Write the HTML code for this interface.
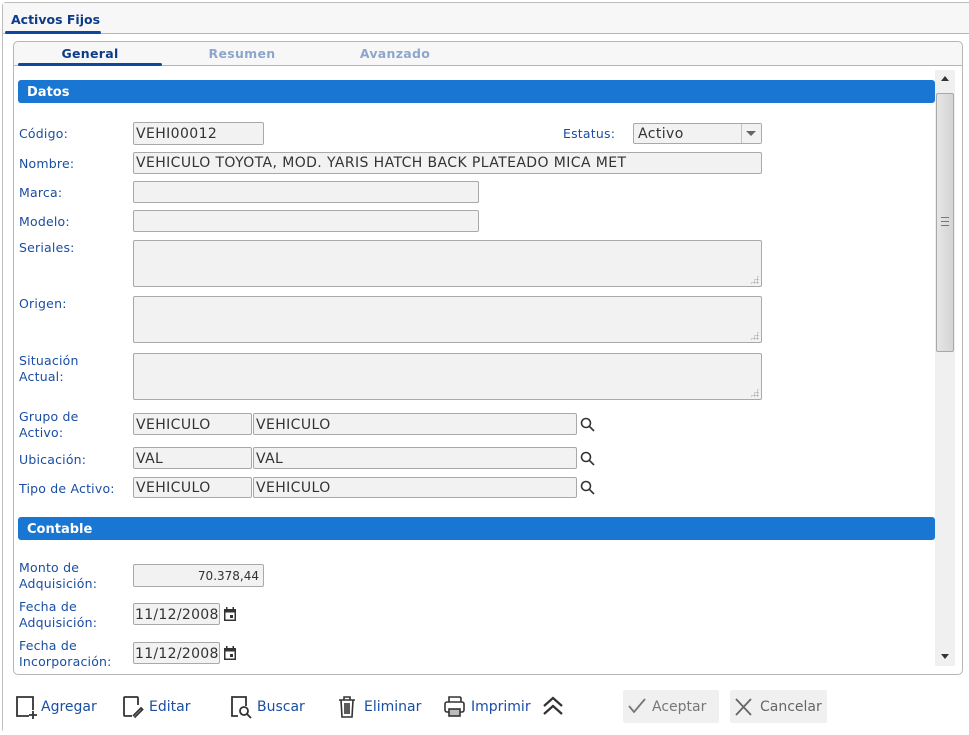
<!DOCTYPE html>
<html><head><meta charset="utf-8"><style>
*{box-sizing:border-box;margin:0;padding:0}
body{width:969px;height:735px;background:#fff;position:relative;overflow:hidden;font-family:"DejaVu Sans",Verdana,sans-serif}
.a{position:absolute}
.lbl{position:absolute;font-size:12.5px;color:#1a4ea3;line-height:16px;letter-spacing:0.2px;margin-top:1px}
.in{position:absolute;background:#f2f2f2;border:1px solid #a9a9a9;border-radius:2px;font-family:"DejaVu Sans",Verdana,sans-serif;font-size:14px;letter-spacing:0.4px;color:#333;padding-left:2px;line-height:22px;white-space:nowrap;overflow:hidden}
.hdr{position:absolute;left:18px;width:917px;height:23px;background:#1976d2;border-radius:3px;color:#fff;font-weight:bold;font-size:13px;padding-left:9px;line-height:25px}
.tb{position:absolute;top:697px;font-size:14px;color:#1a4ea3;line-height:20px}
.grip{position:absolute;right:2px;bottom:2px;width:9px;height:9px;background:radial-gradient(circle,#aaa 0.8px,transparent 1px) 0 0/3px 3px;clip-path:polygon(100% 0,100% 100%,0 100%)}
</style></head><body>
<div class="a" style="left:2px;top:2px;width:980px;height:731px;border:1px solid #bdbdbd;border-radius:4px;background:#fafafa"></div>
<div class="a" style="left:3px;top:3px;width:980px;height:31px;background:#f7f7f7;border-bottom:1px solid #b5b5b5"></div>
<div class="a" style="left:11px;top:12px;font-size:12.5px;font-weight:bold;color:#0d3b8a">Activos Fijos</div>
<div class="a" style="left:5px;top:31px;width:96px;height:3px;background:#0d47a1;border-radius:2px"></div>
<div class="a" style="left:3px;top:34px;width:966px;height:699px;background:#fff"></div>
<div class="a" style="left:13px;top:41px;width:950px;height:634px;border:1px solid #b5b5b5;border-radius:5px;background:#fff"></div>
<div class="a" style="left:14px;top:42px;width:948px;height:24px;background:#f7f7f7;border-bottom:1px solid #b5b5b5;border-radius:5px 5px 0 0"></div>
<div class="a" style="left:18px;top:46px;width:144px;text-align:center;font-size:12.5px;font-weight:bold;color:#0d3b8a;letter-spacing:0.3px">General</div>
<div class="a" style="left:18px;top:63px;width:144px;height:3px;background:#0d47a1;border-radius:2px"></div>
<div class="a" style="left:170px;top:46px;width:144px;text-align:center;font-size:12.5px;font-weight:bold;color:#8fa6cc;letter-spacing:0.3px">Resumen</div>
<div class="a" style="left:323px;top:46px;width:144px;text-align:center;font-size:12.5px;font-weight:bold;color:#8fa6cc;letter-spacing:0.3px">Avanzado</div>
<!-- scrollbar -->
<div class="a" style="left:935px;top:70px;width:20px;height:596px;background:#f0f0f0"></div>
<div class="a" style="left:941px;top:76px;width:0;height:0;border-left:4px solid transparent;border-right:4px solid transparent;border-bottom:5px solid #333"></div>
<div class="a" style="left:941px;top:654px;width:0;height:0;border-left:4px solid transparent;border-right:4px solid transparent;border-top:5px solid #333"></div>
<div class="a" style="left:936px;top:93px;width:18px;height:259px;background:linear-gradient(90deg,#e6e6e6,#d4d4d4);border:1px solid #a9a9a9;border-radius:2px"></div>
<div class="a" style="left:941px;top:217px;width:8px;height:9px;border-top:1px solid #777;border-bottom:1px solid #777"><div style="margin-top:3px;height:1px;background:#777"></div></div>

<div class="hdr" style="top:80px">Datos</div>
<div class="lbl" style="left:19px;top:125px">Código:</div>
<div class="in" style="left:133px;top:122px;width:131px;height:23px">VEHI00012</div>
<div class="lbl" style="left:563px;top:125px">Estatus:</div>
<div class="in" style="left:633px;top:123px;width:129px;height:21px;padding-left:4px;line-height:20px">Activo</div>
<div class="a" style="left:741px;top:124px;width:20px;height:19px;border-left:1px solid #c4c4c4;background:#f2f2f2"></div>
<div class="a" style="left:746px;top:131px;border-left:5px solid transparent;border-right:5px solid transparent;border-top:5px solid #666"></div>
<div class="lbl" style="left:19px;top:155px">Nombre:</div>
<div class="in" style="left:133px;top:152px;width:629px;height:22px;line-height:21px">VEHICULO TOYOTA, MOD. YARIS HATCH BACK PLATEADO MICA MET</div>
<div class="lbl" style="left:19px;top:184px">Marca:</div>
<div class="in" style="left:133px;top:181px;width:346px;height:22px"></div>
<div class="lbl" style="left:19px;top:213px">Modelo:</div>
<div class="in" style="left:133px;top:210px;width:346px;height:22px"></div>
<div class="lbl" style="left:19px;top:239px">Seriales:</div>
<div class="in" style="left:133px;top:240px;width:629px;height:47px"><div class="grip"></div></div>
<div class="lbl" style="left:19px;top:295px">Origen:</div>
<div class="in" style="left:133px;top:296px;width:629px;height:47px"><div class="grip"></div></div>
<div class="lbl" style="left:19px;top:352px">Situación<br>Actual:</div>
<div class="in" style="left:133px;top:353px;width:629px;height:47px"><div class="grip"></div></div>
<div class="lbl" style="left:19px;top:408px">Grupo de<br>Activo:</div>
<div class="in" style="left:133px;top:413px;width:119px;height:22px">VEHICULO</div>
<div class="in" style="left:253px;top:413px;width:324px;height:22px">VEHICULO</div>
<div class="lbl" style="left:19px;top:451px">Ubicación:</div>
<div class="in" style="left:133px;top:447px;width:119px;height:22px">VAL</div>
<div class="in" style="left:253px;top:447px;width:324px;height:22px">VAL</div>
<div class="lbl" style="left:19px;top:480px">Tipo de Activo:</div>
<div class="in" style="left:133px;top:477px;width:119px;height:21px;line-height:21px">VEHICULO</div>
<div class="in" style="left:253px;top:477px;width:324px;height:21px;line-height:21px">VEHICULO</div>
<svg class="a" style="left:579px;top:416px" width="18" height="88" viewBox="0 0 18 88" fill="none" stroke="#333" stroke-width="1.6"><circle cx="7" cy="7" r="4.5"/><path d="M10.3 10.3 15 15"/><circle cx="7" cy="41" r="4.5"/><path d="M10.3 44.3 15 49"/><circle cx="7" cy="70" r="4.5"/><path d="M10.3 73.3 15 78"/></svg>

<div class="hdr" style="top:517px">Contable</div>
<div class="lbl" style="left:19px;top:559px">Monto de<br>Adquisición:</div>
<div class="in" style="left:133px;top:564px;width:131px;height:23px;text-align:right;padding-right:4px;font-size:12px;letter-spacing:0">70.378,44</div>
<div class="lbl" style="left:19px;top:598px">Fecha de<br>Adquisición:</div>
<div class="in" style="left:133px;top:603px;width:87px;height:22px;font-size:14px;letter-spacing:0.3px;padding-left:1px">11/12/2008</div>
<div class="lbl" style="left:19px;top:637px">Fecha de<br>Incorporación:</div>
<div class="in" style="left:133px;top:642px;width:87px;height:22px;font-size:14px;letter-spacing:0.3px;padding-left:1px">11/12/2008</div>
<svg class="a" style="left:222px;top:606px" width="16" height="57" viewBox="0 0 16 57" fill="#333"><path d="M2 3h12v12H2zM4 1h1.5v3H4zM10.5 1H12v3h-1.5z"/><rect x="3.5" y="6.5" width="9" height="7" fill="#fff"/><rect x="8" y="9" width="3" height="3"/><path d="M2 42h12v12H2zM4 40h1.5v3H4zM10.5 40H12v3h-1.5z"/><rect x="3.5" y="45.5" width="9" height="7" fill="#fff"/><rect x="8" y="48" width="3" height="3"/></svg>

<!-- toolbar -->
<svg class="a" style="left:14px;top:694px" width="24" height="26" viewBox="0 0 24 26" fill="none" stroke="#333" stroke-width="1.8"><path d="M15 22H3V3h16v13"/><path d="M19 17v8M15 21h8"/></svg>
<div class="tb" style="left:41px">Agregar</div>
<svg class="a" style="left:121px;top:694px" width="24" height="26" viewBox="0 0 24 26" fill="none" stroke="#333" stroke-width="1.8"><path d="M11 22H4a1 1 0 0 1-1-1V4a1 1 0 0 1 1-1h12a1 1 0 0 1 1 1v7"/><path d="M12 22l8-8 1.5 1.5-8 8"/></svg>
<div class="tb" style="left:149px">Editar</div>
<svg class="a" style="left:229px;top:694px" width="26" height="26" viewBox="0 0 26 26" fill="none" stroke="#333" stroke-width="1.8"><path d="M9 22H3V3h14v9"/><circle cx="15" cy="17" r="4"/><path d="M18 20l4 4"/></svg>
<div class="tb" style="left:257px">Buscar</div>
<svg class="a" style="left:336px;top:694px" width="22" height="26" viewBox="0 0 22 26" fill="none" stroke="#333" stroke-width="1.6"><path d="M3 6h16M8 6V3h6v3M5 6l1 17h10l1-17M9 9v11M11 9v11M13 9v11"/></svg>
<div class="tb" style="left:364px">Eliminar</div>
<svg class="a" style="left:443px;top:694px" width="24" height="26" viewBox="0 0 24 26" fill="none" stroke="#333" stroke-width="1.6"><path d="M6 8V3h11l1 1v4"/><rect x="2" y="8" width="19" height="10" rx="2"/><rect x="6" y="15" width="11" height="7" fill="#bbb"/></svg>
<div class="tb" style="left:471px">Imprimir</div>
<svg class="a" style="left:541px;top:696px" width="24" height="20" viewBox="0 0 24 20" fill="none" stroke="#333" stroke-width="2.2"><path d="M3 10l9-8 9 8M3 18l9-8 9 8"/></svg>
<div class="a" style="left:623px;top:690px;width:96px;height:33px;background:#f0f0f0;border-radius:2px"></div>
<svg class="a" style="left:627px;top:697px" width="20" height="18" viewBox="0 0 20 18" fill="none" stroke="#777" stroke-width="1.8"><path d="M2 9l5 6L18 2"/></svg>
<div class="tb" style="left:652px;color:#777">Aceptar</div>
<div class="a" style="left:730px;top:690px;width:97px;height:33px;background:#f0f0f0;border-radius:2px"></div>
<svg class="a" style="left:734px;top:697px" width="20" height="20" viewBox="0 0 20 20" fill="none" stroke="#666" stroke-width="1.8"><path d="M2 2l15 16M17 2L2 18"/></svg>
<div class="tb" style="left:760px;color:#666">Cancelar</div>
</body></html>
